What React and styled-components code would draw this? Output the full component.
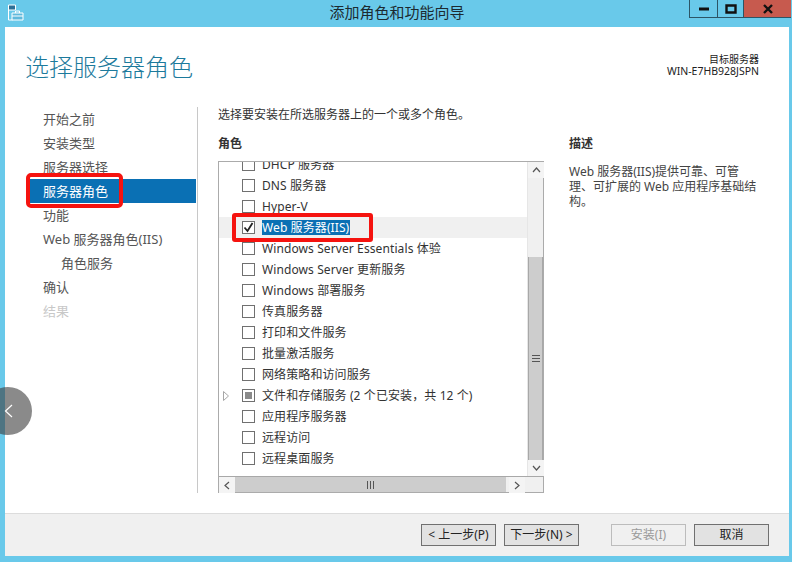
import React from 'react'
import styled, { createGlobalStyle } from 'styled-components'

const steps = [
    { label: '开始之前' },
    { label: '安装类型' },
    { label: '服务器选择' },
    { label: '服务器角色', active: true },
    { label: '功能' },
    { label: 'Web 服务器角色(IIS)' },
    { label: '角色服务', sub: true },
    { label: '确认' },
    { label: '结果', disabled: true },
]

const roles = [
    { label: 'DHCP 服务器' },
    { label: 'DNS 服务器' },
    { label: 'Hyper-V' },
    { label: 'Web 服务器(IIS)', checked: true },
    { label: 'Windows Server Essentials 体验' },
    { label: 'Windows Server 更新服务' },
    { label: 'Windows 部署服务' },
    { label: '传真服务器' },
    { label: '打印和文件服务' },
    { label: '批量激活服务' },
    { label: '网络策略和访问服务' },
    { label: '文件和存储服务 (2 个已安装，共 12 个)', partial: true, expandable: true },
    { label: '应用程序服务器' },
    { label: '远程访问' },
    { label: '远程桌面服务' },
]

const App = () => {
    return (
        <Wizard>
            <GlobalStyle />
            <TitleBar>
                <AppIcon width="17" height="17" viewBox="0 0 17 17" fill="none" stroke="#fff">
                    <path d="M1.5 1h7v5H1.5z" fill="#2d6f96" stroke="#fff" />
                    <path d="M1.5 6v10h4" />
                    <path d="M5 9h11v7H5z" fill="#5fb9dc" />
                    <path d="M8.5 9V7h4v2M5 12h11" />
                </AppIcon>
                <Title>添加角色和功能向导</Title>
                <WindowButtons>
                    <WindowButton $width={28}>
                        <svg width="12" height="4" viewBox="0 0 12 4"><path d="M1 2h10" stroke="#111" strokeWidth="3" /></svg>
                    </WindowButton>
                    <WindowButton $width={26}>
                        <svg width="12" height="10" viewBox="0 0 12 10" fill="none"><path d="M1.5 1.5h9v7h-9z" stroke="#111" strokeWidth="2.4" /></svg>
                    </WindowButton>
                    <WindowButton $width={47} $close>
                        <svg width="12" height="10" viewBox="0 0 12 10" fill="none"><path d="M2 1l8 8M10 1L2 9" stroke="#111" strokeWidth="2.4" /></svg>
                    </WindowButton>
                </WindowButtons>
            </TitleBar>
            <Content>
                <PageHeader>
                    <Heading>选择服务器角色</Heading>
                    <TargetServer>
                        <TargetLabel>目标服务器</TargetLabel>
                        <TargetName>WIN-E7HB928JSPN</TargetName>
                    </TargetServer>
                </PageHeader>
                <Main>
                    <Nav>
                        {steps.map((s) => (
                            <NavItem key={s.label} $active={s.active} $sub={s.sub} $disabled={s.disabled}>
                                {s.label}
                            </NavItem>
                        ))}
                    </Nav>
                    <Pane>
                        <Intro>选择要安装在所选服务器上的一个或多个角色。</Intro>
                        <Columns>
                            <RolesColumn>
                                <SectionTitle>角色</SectionTitle>
                                <ListBox>
                                    <ListArea>
                                        <Rows>
                                            {roles.map((r) => (
                                                <Row key={r.label} $selected={r.checked}>
                                                    <Expander>
                                                        {r.expandable && (
                                                            <svg width="6" height="10" viewBox="0 0 6 10" fill="none"><path d="M.5.5v9l5-4.5z" stroke="#a6a6a6" /></svg>
                                                        )}
                                                    </Expander>
                                                    <CheckBox>
                                                        {r.checked && (
                                                            <svg width="11" height="11" viewBox="0 0 11 11" fill="none"><path d="M1.5 5.5l3 3.5 5-8" stroke="#222" strokeWidth="1.8" /></svg>
                                                        )}
                                                        {r.partial && <PartialMark />}
                                                    </CheckBox>
                                                    <RowLabel $selected={r.checked}>{r.label}</RowLabel>
                                                </Row>
                                            ))}
                                        </Rows>
                                        <VScroll>
                                            <ScrollButton>
                                                <svg width="9" height="6" viewBox="0 0 9 6" fill="none"><path d="M1 5l3.5-4L8 5" stroke="#555" strokeWidth="1.2" /></svg>
                                            </ScrollButton>
                                            <VTrack>
                                                <VThumb>
                                                    <svg width="8" height="7" viewBox="0 0 8 7"><path d="M0 .5h8M0 3.5h8M0 6.5h8" stroke="#555" /></svg>
                                                </VThumb>
                                            </VTrack>
                                            <ScrollButton>
                                                <svg width="9" height="6" viewBox="0 0 9 6" fill="none"><path d="M1 1l3.5 4L8 1" stroke="#555" strokeWidth="1.2" /></svg>
                                            </ScrollButton>
                                        </VScroll>
                                    </ListArea>
                                    <HScroll>
                                        <ScrollButton>
                                            <svg width="6" height="9" viewBox="0 0 6 9" fill="none"><path d="M5 1L1 4.5 5 8" stroke="#555" strokeWidth="1.2" /></svg>
                                        </ScrollButton>
                                        <HThumb>
                                            <svg width="7" height="8" viewBox="0 0 7 8"><path d="M.5 0v8M3.5 0v8M6.5 0v8" stroke="#555" /></svg>
                                        </HThumb>
                                        <ScrollButton>
                                            <svg width="6" height="9" viewBox="0 0 6 9" fill="none"><path d="M1 1l4 3.5L1 8" stroke="#555" strokeWidth="1.2" /></svg>
                                        </ScrollButton>
                                        <Corner />
                                    </HScroll>
                                </ListBox>
                            </RolesColumn>
                            <DescColumn>
                                <SectionTitle>描述</SectionTitle>
                                <DescText>
                                    <span>Web 服务器(IIS)提供可靠、可管</span>
                                    <span>理、可扩展的 Web 应用程序基础结</span>
                                    <span>构。</span>
                                </DescText>
                            </DescColumn>
                        </Columns>
                    </Pane>
                </Main>
                <Footer>
                    <FooterButton>&lt; 上一步(P)</FooterButton>
                    <FooterButton>下一步(N) &gt;</FooterButton>
                    <FooterButton $disabled $gapLeft>安装(I)</FooterButton>
                    <FooterButton>取消</FooterButton>
                </Footer>
            </Content>
            <BackBubble>
                <svg width="9" height="14" viewBox="0 0 9 14" fill="none"><path d="M8 1L1.5 7 8 13" stroke="#fff" strokeWidth="1.2" /></svg>
            </BackBubble>
        </Wizard>
    )
}

export default App

const sans = `"Noto Sans", "Noto Sans CJK SC", sans-serif`

const GlobalStyle = createGlobalStyle`
    html, body {
        margin: 0;
        padding: 0;
        background: #69c9ea;
    }
    *, *::before, *::after {
        box-sizing: border-box;
    }
`

const Wizard = styled.div`
    position: relative;
    width: 792px;
    height: 562px;
    overflow: hidden;
    display: flex;
    flex-direction: column;
    background-color: #69c9ea;
    font-family: ${sans};
    font-size: 12px;
    color: #333;
`

const TitleBar = styled.header`
    position: relative;
    height: 27px;
    flex: none;
    display: flex;
    justify-content: center;
    padding: 3px 0 0 2px;
`

const AppIcon = styled.svg`
    position: absolute;
    left: 7px;
    top: 4px;
`

const Title = styled.span`
    font-size: 15px;
    line-height: 18px;
    color: #1c2a30;
`

const WindowButtons = styled.div`
    position: absolute;
    top: 0;
    right: 1px;
    height: 18px;
    display: flex;
    border-left: 1px solid #2c5566;
    border-bottom: 1px solid #2c5566;
`

const WindowButton = styled.div`
    width: ${({ $width }) => $width}px;
    display: flex;
    align-items: center;
    justify-content: center;
    background-color: ${({ $close }) => ($close ? '#c75a4e' : 'transparent')};
    border-right: ${({ $close }) => ($close ? '0' : '1px solid #2c5566')};
`

const Content = styled.div`
    flex: 1;
    margin: 0 3px 6px 5px;
    display: flex;
    flex-direction: column;
    background-color: #fff;
`

const PageHeader = styled.div`
    height: 80px;
    flex: none;
    display: flex;
    justify-content: space-between;
    padding: 25px 30px 0 20px;
`

const Heading = styled.h1`
    margin: 0;
    font-size: 24px;
    line-height: 30px;
    font-weight: 300;
    color: #1c7a9c;
`

const TargetServer = styled.div`
    display: flex;
    flex-direction: column;
    align-items: flex-end;
    padding-top: 1px;
    color: #222;
`

const TargetLabel = styled.span`
    font-size: 10px;
    line-height: 12px;
`

const TargetName = styled.span`
    font-size: 10.5px;
    line-height: 12px;
`

const Main = styled.div`
    height: 386px;
    flex: none;
    display: flex;
`

const Nav = styled.nav`
    width: 192px;
    flex: none;
    padding-left: 25px;
    display: flex;
    flex-direction: column;
`

const NavItem = styled.div`
    position: relative;
    height: 24px;
    line-height: 24px;
    font-size: 13px;
    padding-left: ${({ $sub }) => ($sub ? '31px' : '13px')};
    margin-right: 1px;
    background-color: ${({ $active }) => ($active ? '#0a70b4' : 'transparent')};
    color: ${({ $active, $disabled }) => ($active ? '#fff' : $disabled ? '#c8c8c8' : '#555')};

    ${({ $active }) => $active && `
        &::after {
            content: '';
            position: absolute;
            left: -4px;
            top: -6px;
            width: 97px;
            height: 35px;
            border: 4px solid #f5130f;
            border-radius: 5px;
        }
    `}
`

const Pane = styled.div`
    flex: 1;
    border-left: 1px solid #c8c8c8;
    padding-left: 20px;
    display: flex;
    flex-direction: column;
`

const Intro = styled.div`
    height: 15px;
    line-height: 15px;
    font-size: 12px;
`

const Columns = styled.div`
    flex: 1;
    display: flex;
    gap: 25px;
    padding-top: 14px;
`

const RolesColumn = styled.section`
    width: 326px;
    flex: none;
    display: flex;
    flex-direction: column;
`

const DescColumn = styled.section`
    flex: 1;
    display: flex;
    flex-direction: column;
`

const SectionTitle = styled.h2`
    margin: 0 0 10px;
    height: 15px;
    font-size: 12px;
    line-height: 15px;
    font-weight: 700;
    color: #333;
`

const DescText = styled.p`
    margin: 3px 0 0;
    line-height: 15px;
    font-size: 12px;
    color: #444;

    span {
        display: block;
        white-space: nowrap;
    }
`

const ListBox = styled.div`
    height: 332px;
    border: 1px solid #ababab;
    display: flex;
    flex-direction: column;
    background-color: #fff;
`

const ListArea = styled.div`
    flex: 1;
    min-height: 0;
    display: flex;
`

const Rows = styled.div`
    flex: 1;
    min-width: 0;
    overflow: hidden;
    display: flex;
    flex-direction: column;

    & > :first-child {
        margin-top: -8px;
    }
`

const Row = styled.div`
    position: relative;
    height: 21px;
    flex: none;
    display: flex;
    align-items: center;
    background-color: ${({ $selected }) => ($selected ? '#f0f0f0' : 'transparent')};

    ${({ $selected }) => $selected && `
        &::after {
            content: '';
            position: absolute;
            left: 13px;
            top: -4px;
            width: 141px;
            height: 29px;
            border: 4px solid #f5130f;
            border-radius: 3px;
        }
    `}
`

const Expander = styled.span`
    width: 23px;
    flex: none;
    display: flex;
    justify-content: center;
    padding-right: 9px;
`

const CheckBox = styled.span`
    width: 13px;
    height: 13px;
    flex: none;
    display: flex;
    align-items: center;
    justify-content: center;
    border: 1px solid #707070;
    background-color: #fff;
`

const PartialMark = styled.span`
    width: 7px;
    height: 7px;
    background-color: #8a8a8a;
`

const RowLabel = styled.span`
    margin-left: 7px;
    padding: 0 1px 0 0;
    font-size: 12px;
    line-height: 15px;
    letter-spacing: 0.1px;
    white-space: nowrap;
    color: ${({ $selected }) => ($selected ? '#fff' : '#333')};
    background-color: ${({ $selected }) => ($selected ? '#0a70b4' : 'transparent')};
`

const VScroll = styled.div`
    width: 16px;
    flex: none;
    display: flex;
    flex-direction: column;
    border-left: 1px solid #e6e6e6;
    background-color: #f0f0f0;
`

const ScrollButton = styled.div`
    width: 16px;
    height: 16px;
    flex: none;
    display: flex;
    align-items: center;
    justify-content: center;
    background-color: #f4f4f4;
`

const VTrack = styled.div`
    flex: 1;
    display: flex;
    flex-direction: column;
    justify-content: flex-end;
`

const VThumb = styled.div`
    height: 203px;
    display: flex;
    align-items: center;
    justify-content: center;
    background-color: #cdcdcd;
    border: 1px solid #a8a8a8;
    border-width: 0 1px;
`

const HScroll = styled.div`
    height: 16px;
    flex: none;
    display: flex;
    border-top: 1px solid #a8a8a8;
    background-color: #f0f0f0;
`

const HThumb = styled.div`
    width: 271px;
    margin-right: 3px;
    display: flex;
    align-items: center;
    justify-content: center;
    background-color: #cdcdcd;
`

const Corner = styled.div`
    flex: 1;
    background-color: #f0f0f0;
`

const Footer = styled.footer`
    flex: 1;
    margin-top: 20px;
    display: flex;
    gap: 8px;
    align-items: flex-start;
    padding: 10px 0 0 416px;
    border-top: 1px solid #dcdcdc;
    background-color: #f0f0f0;
`

const FooterButton = styled.button`
    width: 75px;
    height: 22px;
    padding: 0;
    margin-left: ${({ $gapLeft }) => ($gapLeft ? '24px' : '0')};
    font-family: inherit;
    font-size: 12px;
    line-height: 18px;
    border: 1px solid ${({ $disabled }) => ($disabled ? '#bcbcbc' : '#707070')};
    background-color: ${({ $disabled }) => ($disabled ? '#f0f0f0' : '#e2e2e2')};
    color: ${({ $disabled }) => ($disabled ? '#9a9a9a' : '#222')};
`

const BackBubble = styled.div`
    position: absolute;
    left: -16px;
    top: 387px;
    width: 48px;
    height: 48px;
    border-radius: 50%;
    display: flex;
    align-items: center;
    justify-content: center;
    background-color: rgba(60, 60, 60, 0.6);
`
